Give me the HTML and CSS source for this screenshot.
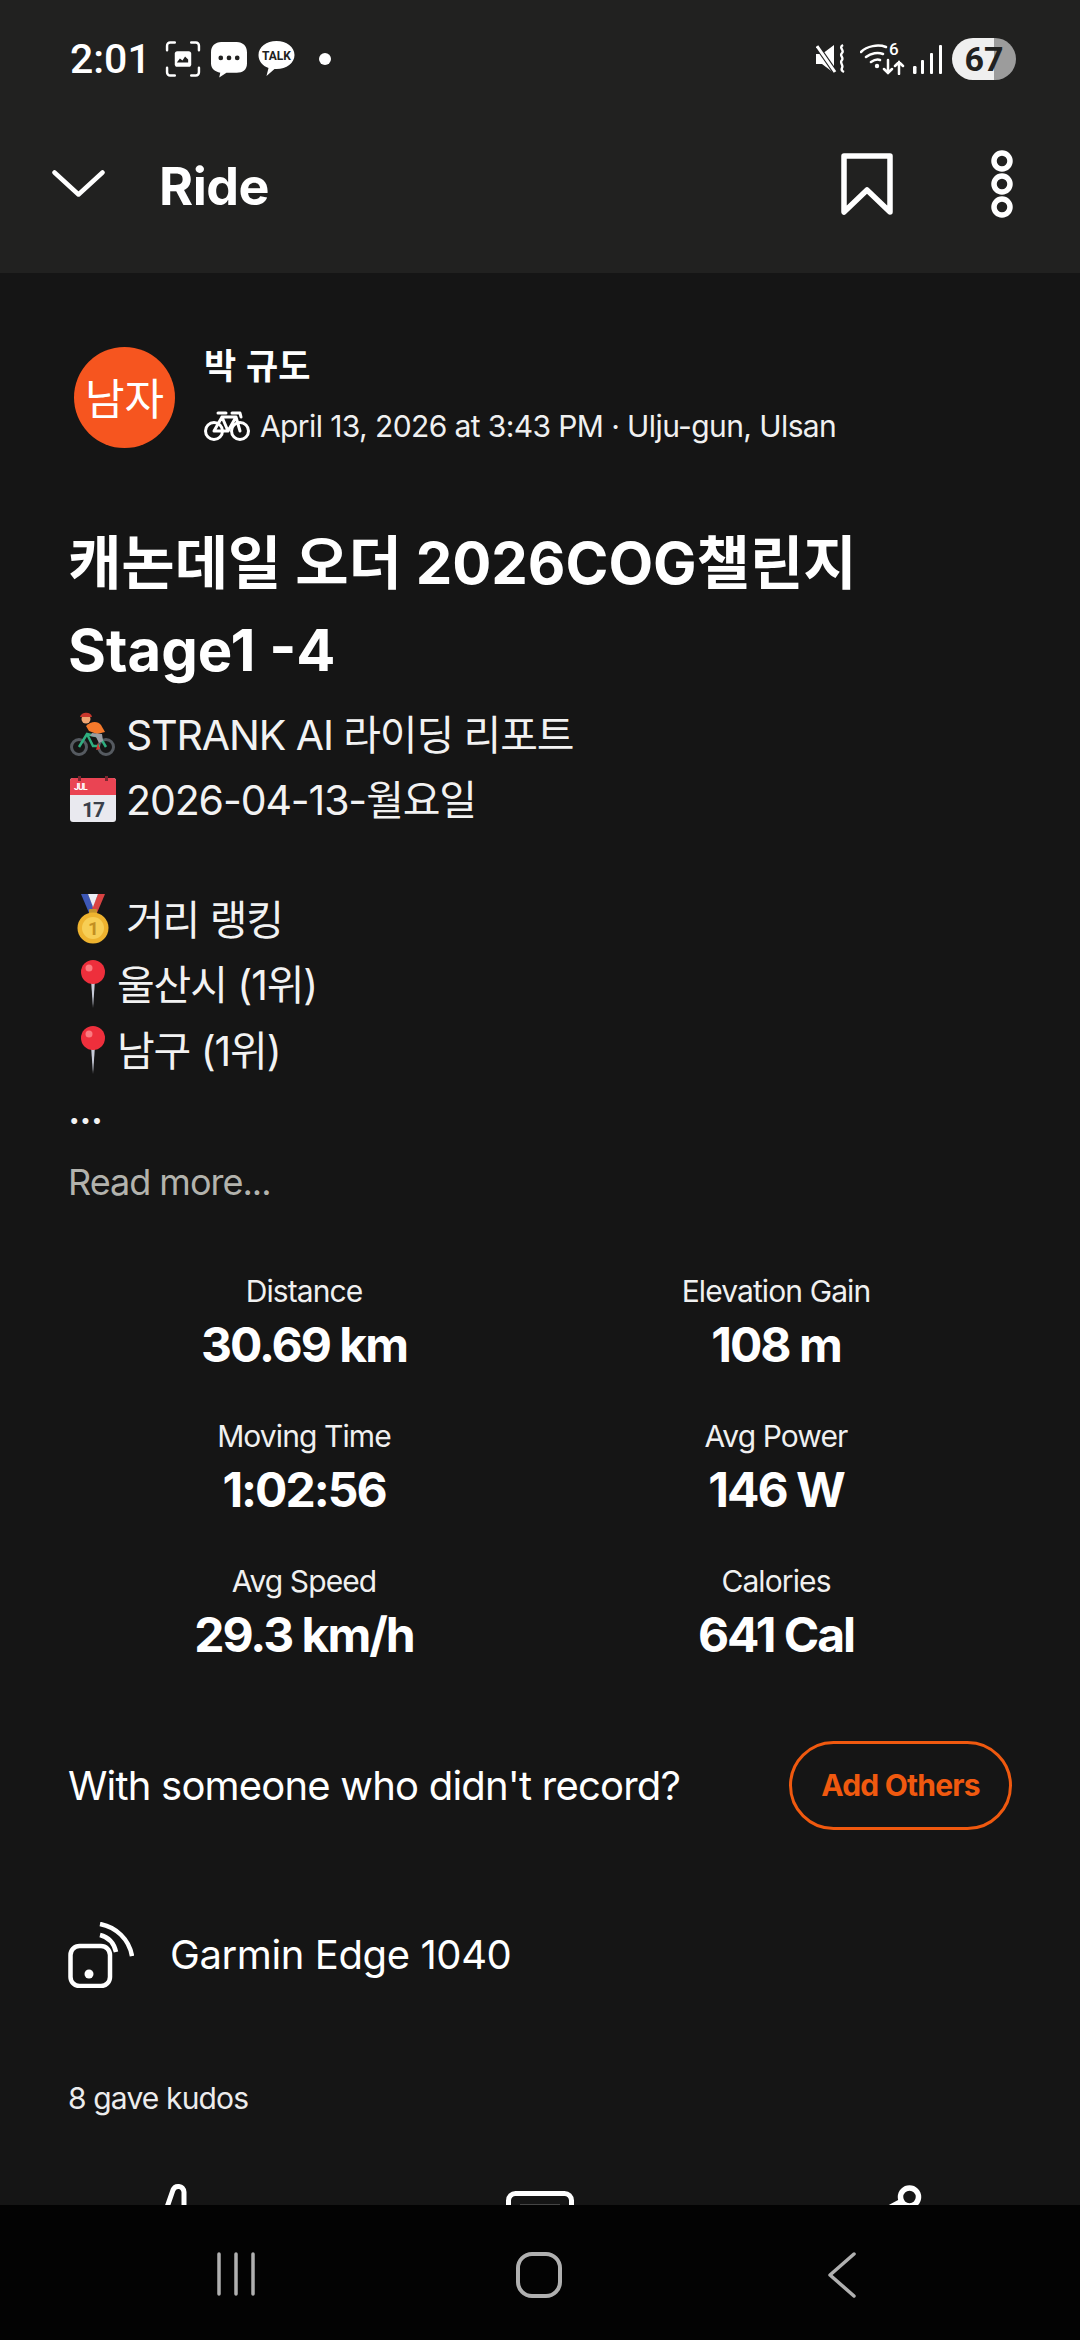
FILE: index.html
```html
<!DOCTYPE html>
<html lang="ko">
<head>
    <meta charset="UTF-8">
    <meta name="viewport" content="width=device-width, initial-scale=1.0">
    <title>Ride</title>
    <link rel="stylesheet" href="styles.css">
</head>
<body>
    <div class="app">
        <div class="top">
            <div class="status">
                <div class="status-left">
                    <span class="time">2:01</span>
                    <svg class="ic-shot" viewBox="0 0 34 35" fill="none" stroke="#fff" stroke-width="2.4" stroke-linecap="round">
                        <path d="M1.5 9V4.5a3 3 0 0 1 3-3H9M25 1.5h4.500a3 3 0 0 1 3 3V9M32.500 26v4.500a3 3 0 0 1-3 3H25M9 33.500H4.500a3 3 0 0 1-3-3V26"/>
                        <rect x="9" y="10" width="16" height="15" rx="2.500" fill="#fff" stroke="none"/>
                        <path d="M11 21l3-4 2.500 2 2.500-4 3 3v3z" fill="#212120" stroke="none"/>
                    </svg>
                    <svg class="ic-bubble" viewBox="0 0 35 36">
                        <path d="M10 1h15c6 0 10 4 10 10v11c0 6-4 9-10 9H15l-7 4.500 1-4.700C4 30 0 27 0 22V11C0 5 4 1 10 1z" fill="#fff"/>
                        <circle cx="9.500" cy="16.500" r="2.300" fill="#212120"/>
                        <circle cx="17.500" cy="16.500" r="2.300" fill="#212120"/>
                        <circle cx="25.500" cy="16.500" r="2.300" fill="#212120"/>
                    </svg>
                    <svg class="ic-talk" viewBox="0 0 36 36">
                        <path d="M18 0c10 0 18 6 18 14s-8 14-18 14h-2l-8 7 2-8C4 25 0 20 0 14 0 6 8 0 18 0z" fill="#fff"/>
                        <text x="18" y="19" text-anchor="middle" class="talk-text">TALK</text>
                    </svg>
                    <span class="status-dot"></span>
                </div>
                <div class="status-right">
                    <svg class="ic-mute" viewBox="0 0 30 30" fill="none">
                        <path d="M0 10h6l12-9v28L6 20H0z" fill="#fff"/>
                        <path d="M1 2l18 26" stroke="#212120" stroke-width="5"/>
                        <path d="M1 2l18 26" stroke="#fff" stroke-width="3"/>
                        <path d="M27 1c-5 3 2 5-1 8-3 3 2 4 0 7-3 3 2 5 0 8-1 2 0 3 2 4" stroke="#fff" stroke-width="2.400"/>
                    </svg>
                    <svg class="ic-wifi" viewBox="0 -6 45 38" fill="none" stroke="#fff" stroke-linecap="round">
                        <path d="M1 9C7 3 18 1 26 4M6 14c5-4 12-5 17-3M11 19c3-2 6-3 9-2" stroke-width="2.500"/>
                        <circle cx="17" cy="23" r="2.200" fill="#fff" stroke="none"/>
                        <text x="29" y="12" class="wifi-text" stroke="none">6</text>
                        <path d="M28 17v13M24 26l4 4 4-4M39 31V19M35 23l4-4 4 4" stroke-width="2.500"/>
                    </svg>
                    <svg class="ic-signal" viewBox="0 0 29 29" fill="#fff">
                        <rect x="0" y="21" width="3.500" height="8" rx="1.200"/>
                        <rect x="8" y="15" width="3" height="14" rx="1"/>
                        <rect x="17" y="8" width="3" height="21" rx="1"/>
                        <rect x="26" y="0" width="3" height="29" rx="1"/>
                    </svg>
                    <span class="battery">67</span>
                </div>
            </div>
            <div class="header">
                <svg class="ic-chevron" viewBox="0 0 53 27" fill="none" stroke="#fff" stroke-width="4.500" stroke-linecap="round" stroke-linejoin="round">
                    <path d="M2.500 2.500L26.500 24.500 50.500 2.500"/>
                </svg>
                <span class="page-title">Ride</span>
                <svg class="ic-bookmark" viewBox="0 0 52 62" fill="none" stroke="#fff" stroke-width="5.500" stroke-linejoin="round" stroke-linecap="round">
                    <path d="M3 3h46v56L26 37 3 59z"/>
                </svg>
                <svg class="ic-more" viewBox="0 0 22 68" fill="none" stroke="#fff" stroke-width="5.500">
                    <circle cx="11" cy="11" r="8"/>
                    <circle cx="11" cy="34" r="8"/>
                    <circle cx="11" cy="57" r="8"/>
                </svg>
            </div>
        </div>

        <div class="content">
            <div class="athlete">
                <div class="avatar">남자</div>
                <div class="athlete-info">
                    <div class="athlete-name">박 규도</div>
                    <div class="athlete-meta">
                        <svg class="ic-bike" viewBox="0 0 46 30" fill="none" stroke="#fff" stroke-width="3" stroke-linejoin="round" stroke-linecap="round">
                            <circle cx="10" cy="20" r="8.500"/>
                            <circle cx="36" cy="20" r="8.500"/>
                            <path d="M10 20l8-14h14l4 14M18 6l6 14h-14M32 6L24 20M14 2h8M28 2h8l1 4"/>
                        </svg>
                        <span>April 13, 2026 at 3:43 PM · Ulju-gun, Ulsan</span>
                    </div>
                </div>
            </div>

            <h1 class="activity-title">캐논데일 오더 2026COG챌린지<br>Stage1 -4</h1>

            <div class="desc">
                <div class="desc-line">
                    <svg class="emoji" viewBox="0 0 46 46">
                        <circle cx="9" cy="36" r="7.500" fill="none" stroke="#555a60" stroke-width="3"/>
                        <circle cx="36" cy="36" r="7.500" fill="none" stroke="#555a60" stroke-width="3"/>
                        <path d="M9 36l8-13 13 3 6 10M17 23l6 12h7" fill="none" stroke="#2fae7f" stroke-width="2.500"/>
                        <path d="M16 15c5-5 12-5 15-1l4 7-8 2-8-3z" fill="#f4792b"/>
                        <path d="M22 22l10 1 1 7-4 2-3-6-6-1z" fill="#9a9ca3"/>
                        <circle cx="16" cy="8" r="4.500" fill="#f0a572"/>
                        <path d="M10 6c1-5 11-6 12 0z" fill="#c9372c"/>
                        <path d="M28 32l2 6-4 1z" fill="#d8372f"/>
                    </svg>
                    <span>STRANK AI 라이딩 리포트</span>
                </div>
                <div class="desc-line">
                    <svg class="emoji" viewBox="0 0 46 46">
                        <rect x="0" y="2" width="46" height="44" rx="3" fill="#e9e9ef"/>
                        <path d="M0 5a3 3 0 0 1 3-3h40a3 3 0 0 1 3 3v14H0z" fill="#ea4453"/>
                        <rect x="8" y="0" width="3" height="5" fill="#7c2730"/>
                        <rect x="35" y="0" width="3" height="5" fill="#7c2730"/>
                        <text x="4" y="14" class="cal-month">JUL</text>
                        <text x="23" y="41" text-anchor="middle" class="cal-day">17</text>
                    </svg>
                    <span>2026-04-13-월요일</span>
                </div>
                <div class="desc-blank"></div>
                <div class="desc-line">
                    <svg class="emoji emoji-medal" viewBox="0 0 32 50">
                        <path d="M4 0h7l6 14-5 5z" fill="#3d57b5"/>
                        <path d="M28 0h-7l-6 14 5 5z" fill="#d94343"/>
                        <path d="M11 0h10l-5 13z" fill="#eceef5"/>
                        <rect x="12" y="15" width="8" height="6" rx="1" fill="#c4922a"/>
                        <circle cx="16" cy="34" r="15.500" fill="#eeb32f"/>
                        <circle cx="16" cy="34" r="11" fill="#f7ce55"/>
                        <text x="16" y="41" text-anchor="middle" class="medal-num">1</text>
                    </svg>
                    <span>거리 랭킹</span>
                </div>
                <div class="desc-line desc-pin">
                    <svg class="emoji emoji-pin" viewBox="0 0 26 48">
                        <path d="M11 20h4l-2 28z" fill="#c8cbd8"/>
                        <circle cx="13" cy="12" r="12" fill="#ee2f3c"/>
                        <circle cx="9" cy="8" r="3.500" fill="#fb7b80"/>
                    </svg>
                    <span>울산시 (1위)</span>
                </div>
                <div class="desc-line desc-pin">
                    <svg class="emoji emoji-pin" viewBox="0 0 26 48">
                        <path d="M11 20h4l-2 28z" fill="#c8cbd8"/>
                        <circle cx="13" cy="12" r="12" fill="#ee2f3c"/>
                        <circle cx="9" cy="8" r="3.500" fill="#fb7b80"/>
                    </svg>
                    <span>남구 (1위)</span>
                </div>
                <div class="desc-more">...</div>
            </div>
            <div class="read-more">Read more...</div>

            <div class="stats">
                <div class="stat"><div class="stat-label">Distance</div><div class="stat-value">30.69 km</div></div>
                <div class="stat"><div class="stat-label">Elevation Gain</div><div class="stat-value">108 m</div></div>
                <div class="stat"><div class="stat-label">Moving Time</div><div class="stat-value">1:02:56</div></div>
                <div class="stat"><div class="stat-label">Avg Power</div><div class="stat-value">146 W</div></div>
                <div class="stat"><div class="stat-label">Avg Speed</div><div class="stat-value">29.3 km/h</div></div>
                <div class="stat"><div class="stat-label">Calories</div><div class="stat-value">641 Cal</div></div>
            </div>

            <div class="others">
                <span>With someone who didn't record?</span>
                <button class="add-btn">Add Others</button>
            </div>

            <div class="device">
                <svg class="ic-device" viewBox="0 0 66 66" fill="none" stroke="#fff" stroke-width="4.500">
                    <rect x="2.500" y="24" width="39.500" height="40" rx="9"/>
                    <circle cx="21" cy="52" r="4.500" fill="#fff" stroke="none"/>
                    <path d="M32 13c8 2 14 8 16 17M32 2c16 3 29 15 32 32"/>
                </svg>
                <span>Garmin Edge 1040</span>
            </div>

            <div class="kudos">8 gave kudos</div>

            <div class="actions">
                <svg class="ic-action" viewBox="0 0 70 70" fill="none" stroke="#fff" stroke-width="5" stroke-linejoin="round">
                    <path d="M20 30L28 7c2-5 10-5 11 2v21"/>
                </svg>
                <svg class="ic-action" viewBox="0 0 70 70" fill="none" stroke="#fff" stroke-width="5" stroke-linejoin="round">
                    <rect x="3.500" y="10.500" width="63" height="46" rx="7"/>
                    <path d="M15 22.500h40" stroke="#777" stroke-width="2"/>
                </svg>
                <svg class="ic-action" viewBox="0 0 70 70" fill="none" stroke="#fff" stroke-width="5.500">
                    <circle cx="44.500" cy="14" r="9"/>
                    <path d="M20 24l15-8 2 8z" fill="#fff" stroke="none"/>
                </svg>
            </div>
        </div>

        <div class="navbar">
            <svg class="ic-nav ic-recents" viewBox="0 0 40 44" fill="none" stroke="#b0b0b0" stroke-width="3.500" stroke-linecap="round">
                <path d="M3 2v40M20 2v40M37 2v40"/>
            </svg>
            <svg class="ic-nav ic-home" viewBox="0 0 46 46" fill="none" stroke="#b0b0b0" stroke-width="4">
                <rect x="2" y="2" width="42" height="42" rx="14"/>
            </svg>
            <svg class="ic-nav ic-back" viewBox="0 0 28 46" fill="none" stroke="#b0b0b0" stroke-width="3.500" stroke-linecap="round" stroke-linejoin="round">
                <path d="M26 2L2 23l24 21"/>
            </svg>
        </div>
    </div>
</body>
</html>
```

FILE: styles.css
```css
* {
    box-sizing: border-box;
}
body {
    margin: 0;
    background-color: #151515;
    color: #fff;
    font-family: Inter, "Noto Sans CJK KR", sans-serif;
}
.app {
    width: 1080px;
    height: 2340px;
    display: flex;
    flex-direction: column;
    overflow: hidden;
}
.top {
    height: 273px;
    background-color: #212120;
}
.status {
    height: 118px;
    padding: 0 64px 0 70px;
    display: flex;
    align-items: center;
    justify-content: space-between;
}
.status-left,
.status-right {
    display: flex;
    align-items: center;
}
.time {
    font-family: Roboto, sans-serif;
    font-size: 41px;
    font-weight: 500;
    width: 95px;
}
.ic-shot {
    width: 36px;
    height: 36px;
}
.ic-bubble {
    width: 36px;
    height: 37px;
    margin-left: 10px;
}
.ic-talk {
    width: 37px;
    height: 36px;
    margin-left: 11px;
}
.talk-text {
    font-family: Roboto, sans-serif;
    font-size: 12px;
    font-weight: 700;
    fill: #212120;
}
.status-dot {
    width: 12px;
    height: 12px;
    margin-left: 24px;
    border-radius: 50%;
    background-color: #fff;
}
.ic-mute {
    width: 30px;
    height: 30px;
}
.ic-wifi {
    width: 45px;
    height: 38px;
    margin: -6px 0 0 14px;
}
.wifi-text {
    font-family: Roboto, sans-serif;
    font-size: 17px;
    font-weight: 500;
    fill: #fff;
}
.ic-signal {
    width: 29px;
    height: 29px;
    margin-left: 8px;
}
.battery {
    width: 64px;
    height: 42px;
    margin-left: 10px;
    border-radius: 21px;
    background: linear-gradient(90deg, #efefef 42px, #9c9c9c 42px);
    color: #212120;
    font-family: Roboto, sans-serif;
    font-size: 34px;
    font-weight: 700;
    line-height: 42px;
    text-align: center;
}
.header {
    height: 155px;
    padding: 0 67px 24px 52px;
    display: flex;
    align-items: center;
}
.ic-chevron {
    width: 53px;
    height: 27px;
}
.page-title {
    flex: 1;
    margin: 6px 0 0 54px;
    font-size: 52px;
    font-weight: 700;
    letter-spacing: -0.5px;
}
.ic-bookmark {
    width: 52px;
    height: 62px;
}
.ic-more {
    width: 22px;
    height: 68px;
    margin-left: 98px;
}
.content {
    flex: 1;
    min-height: 0;
    overflow: hidden;
    padding: 74px 68px 0;
}
.athlete {
    display: flex;
    gap: 29px;
    margin-left: 6px;
}
.avatar {
    width: 101px;
    height: 101px;
    flex: none;
    border-radius: 50%;
    background-color: #f6551f;
    font-family: "Noto Sans CJK KR", sans-serif;
    font-size: 43px;
    line-height: 98px;
    text-align: center;
}
.athlete-info {
    margin-top: -3px;
}
.athlete-name {
    font-family: "Noto Sans CJK KR", sans-serif;
    font-size: 35px;
    font-weight: 700;
    line-height: 40px;
}
.athlete-meta {
    height: 44px;
    margin-top: 20px;
    display: flex;
    align-items: center;
    gap: 10px;
    font-size: 30px;
    letter-spacing: -0.6px;
    color: #f0f0f0;
}
.ic-bike {
    width: 46px;
    height: 30px;
}
.activity-title {
    margin: 72px 0 0;
    font-size: 58px;
    font-weight: 700;
    line-height: 87px;
}
.desc {
    margin-top: 7px;
    font-size: 41px;
    letter-spacing: -1.1px;
    color: #f2f2f2;
}
.desc-line {
    height: 65.500px;
    display: flex;
    align-items: center;
    gap: 10px;
    padding-left: 2px;
}
.desc-line span {
    margin-top: -4px;
}
.desc-blank {
    height: 54px;
}
.desc-more {
    height: 53px;
    line-height: 53px;
    font-weight: 500;
}
.emoji {
    width: 46px;
    height: 46px;
    flex: none;
}
.emoji-medal {
    width: 32px;
    height: 50px;
    margin: 0 7px 0 7px;
}
.emoji-pin {
    width: 26px;
    height: 48px;
    margin-left: 10px;
    margin-right: 1px;
}
.cal-month {
    font-family: Roboto, sans-serif;
    font-size: 9px;
    font-weight: 700;
    fill: #fff;
}
.cal-day {
    font-family: Roboto, sans-serif;
    font-size: 21px;
    font-weight: 700;
    fill: #3a3f4a;
}
.medal-num {
    font-family: Roboto, sans-serif;
    font-size: 19px;
    font-weight: 700;
    fill: #c38f22;
}
.read-more {
    margin-top: 15px;
    font-size: 36px;
    letter-spacing: -1px;
    line-height: 62px;
    color: #b3b3ad;
}
.stats {
    margin-top: 58px;
    display: grid;
    grid-template-columns: 1fr 1fr;
    row-gap: 41px;
    text-align: center;
}
.stat-label {
    font-size: 30px;
    letter-spacing: -0.9px;
    line-height: 40px;
    color: #f0f0f0;
}
.stat-value {
    margin-top: 4px;
    font-size: 48px;
    font-weight: 700;
    letter-spacing: -2px;
    line-height: 60px;
}
.others {
    margin-top: 76px;
    display: flex;
    align-items: center;
    justify-content: space-between;
    font-size: 40px;
    letter-spacing: -0.8px;
}
.add-btn {
    width: 223px;
    height: 89px;
    padding: 0;
    border: 3px solid #f0590f;
    border-radius: 45px;
    background: none;
    color: #f0590f;
    font-family: Inter, sans-serif;
    font-size: 30px;
    font-weight: 700;
    letter-spacing: -0.8px;
}
.device {
    margin-top: 92px;
    display: flex;
    align-items: center;
    gap: 36px;
    font-size: 40px;
    letter-spacing: -0.4px;
}
.ic-device {
    width: 66px;
    height: 66px;
}
.kudos {
    margin-top: 90px;
    font-size: 30px;
    letter-spacing: -0.85px;
    line-height: 40px;
    color: #ececec;
}
.actions {
    margin: 65px 0 0 77px;
    display: flex;
    gap: 290px;
}
.ic-action {
    width: 70px;
    height: 70px;
    flex: none;
}
.navbar {
    height: 135px;
    flex: none;
    background-color: #030303;
    position: relative;
}
.ic-nav {
    position: absolute;
    top: 47px;
}
.ic-recents {
    left: 216px;
    width: 40px;
    height: 44px;
}
.ic-home {
    left: 516px;
    width: 46px;
    height: 46px;
}
.ic-back {
    left: 828px;
    width: 28px;
    height: 46px;
}
```
